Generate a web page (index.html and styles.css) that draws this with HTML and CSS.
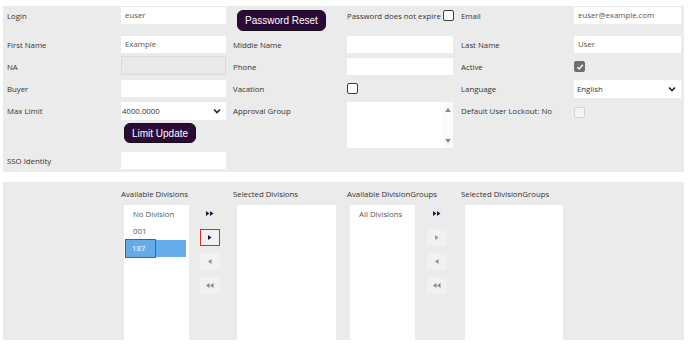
FILE: index.html
```html
<!DOCTYPE html>
<html>
<head>
    <meta charset="utf-8">
    <title>User</title>
    <link rel="stylesheet" href="styles.css">
</head>
<body>
    <div class="panel user-panel">
        <div class="label">Login</div>
        <div class="field">euser</div>
        <div><button class="dark-button reset-button">Password Reset</button></div>
        <div class="check-cell">Password does not expire <span class="check"></span></div>
        <div class="label">Email</div>
        <div class="field wide">euser@example.com</div>

        <div class="label">First Name</div>
        <div class="field">Example</div>
        <div class="label">Middle Name</div>
        <div class="field mid"></div>
        <div class="label">Last Name</div>
        <div class="field wide">User</div>

        <div class="label tall">NA</div>
        <div class="field disabled"></div>
        <div class="label tall">Phone</div>
        <div class="field mid shifted"></div>
        <div class="label tall">Active</div>
        <div class="check-cell tall"><span class="check checked">
            <svg width="8" height="8" viewBox="0 0 8 8"><path d="M1.3 4.2 L3.2 6 L6.8 1.8" fill="none" stroke="#fff" stroke-width="1.4"/></svg>
        </span></div>

        <div class="label">Buyer</div>
        <div class="field"></div>
        <div class="label">Vacation</div>
        <div class="check-cell"><span class="check"></span></div>
        <div class="label">Language</div>
        <div class="field wide select">English
            <svg width="8" height="6" viewBox="0 0 8 6"><path d="M1 1.5 L4 4.5 L7 1.5" fill="none" stroke="#222" stroke-width="1.6"/></svg>
        </div>

        <div class="label">Max Limit</div>
        <div class="field select limit">4000.0000
            <svg width="8" height="6" viewBox="0 0 8 6"><path d="M1 1.5 L4 4.5 L7 1.5" fill="none" stroke="#222" stroke-width="1.6"/></svg>
        </div>
        <div class="label">Approval Group</div>
        <div class="textarea">
            <div class="scrollbar">
                <span class="arrow-up"></span>
                <span class="arrow-down"></span>
            </div>
        </div>
        <div class="label">Default User Lockout: No</div>
        <div class="check-cell"><span class="check disabled-check"></span></div>

        <div></div>
        <div><button class="dark-button limit-button">Limit Update</button></div>
        <div></div>
        <div></div>
        <div></div>

        <div class="label">SSO Identity</div>
        <div class="field"></div>
    </div>

    <div class="panel division-panel">
        <div></div>
        <div class="picker">
            <div class="picker-label">Available Divisions</div>
            <div class="picker-body">
                <div class="list narrow">
                    <div class="list-item">No Division</div>
                    <div class="list-item">001</div>
                    <div class="list-item selected">187<span class="highlight"></span></div>
                </div>
                <div class="move-buttons">
                    <div class="move-button plain">
                        <svg width="8" height="5" viewBox="0 0 8 5"><path d="M0 0 L3.5 2.5 L0 5 Z M4 0 L7.5 2.5 L4 5 Z" fill="#1b1b4a"/></svg>
                    </div>
                    <div class="move-button marked">
                        <svg width="4" height="5" viewBox="0 0 4 5"><path d="M0 0 L3.5 2.5 L0 5 Z" fill="#1b1b4a"/></svg>
                    </div>
                    <div class="move-button">
                        <svg width="4" height="5" viewBox="0 0 4 5"><path d="M3.5 0 L0 2.5 L3.5 5 Z" fill="#8d8a9c"/></svg>
                    </div>
                    <div class="move-button">
                        <svg width="8" height="5" viewBox="0 0 8 5"><path d="M3.5 0 L0 2.5 L3.5 5 Z M7.5 0 L4 2.5 L7.5 5 Z" fill="#8a7f98"/></svg>
                    </div>
                </div>
            </div>
        </div>
        <div class="picker">
            <div class="picker-label">Selected Divisions</div>
            <div class="list broad"></div>
        </div>
        <div class="picker">
            <div class="picker-label">Available DivisionGroups</div>
            <div class="picker-body">
                <div class="list narrow">
                    <div class="list-item">All Divisions</div>
                </div>
                <div class="move-buttons">
                    <div class="move-button plain">
                        <svg width="8" height="5" viewBox="0 0 8 5"><path d="M0 0 L3.5 2.5 L0 5 Z M4 0 L7.5 2.5 L4 5 Z" fill="#1b1b4a"/></svg>
                    </div>
                    <div class="move-button">
                        <svg width="4" height="5" viewBox="0 0 4 5"><path d="M0 0 L3.5 2.5 L0 5 Z" fill="#9a97a6"/></svg>
                    </div>
                    <div class="move-button">
                        <svg width="4" height="5" viewBox="0 0 4 5"><path d="M3.5 0 L0 2.5 L3.5 5 Z" fill="#8d8a9c"/></svg>
                    </div>
                    <div class="move-button">
                        <svg width="8" height="5" viewBox="0 0 8 5"><path d="M3.5 0 L0 2.5 L3.5 5 Z M7.5 0 L4 2.5 L7.5 5 Z" fill="#8a7f98"/></svg>
                    </div>
                </div>
            </div>
        </div>
        <div class="picker">
            <div class="picker-label">Selected DivisionGroups</div>
            <div class="list broad"></div>
        </div>
    </div>
</body>
</html>
```

FILE: styles.css
```css
:root {
    --panel-bg: #ebebeb;
    --label-color: #333333;
    --value-color: #555555;
    --button-bg: #2c0a38;
    --select-blue: #63ace9;
    --mark-red: #e0282c;
}

* {
    margin: 0;
    padding: 0;
    box-sizing: border-box;
}

body {
    background: #ffffff;
    font-family: "Open Sans", "Noto Sans", sans-serif;
    font-size: 7.8px;
    color: var(--label-color);
    padding: 6px 4px 0 3px;
}

.panel {
    background: var(--panel-bg);
    width: 681px;
    display: grid;
    grid-template-columns: 114px 112px 114px 114px 113px 107px;
    padding-left: 4px;
}

/* top form */
.user-panel {
    grid-template-rows: 29px 20px 24px 22px 21px 29px 17px;
    padding-top: 1px;
    padding-bottom: 3px;
    align-items: start;
}

.label {
    line-height: 17px;
    padding-top: 1px;
    white-space: nowrap;
}

.label.tall {
    line-height: 20px;
}

.field {
    width: 105px;
    height: 17px;
    line-height: 17px;
    background: #ffffff;
    padding: 0 4px;
    color: var(--value-color);
    white-space: nowrap;
}

.field.mid {
    width: 106px;
}

.field.wide {
    width: 107px;
}

.field.shifted {
    margin-top: 2px;
}

.field.disabled {
    height: 19px;
    background: #e9e9e9;
    border: 1px solid #dadada;
}

.select {
    display: flex;
    justify-content: space-between;
    align-items: center;
    height: 18px;
    color: #333;
    padding: 0 5px 0 3px;
}

.select.limit {
    padding-left: 1px;
}

.check-cell {
    display: flex;
    align-items: center;
    gap: 2px;
    height: 17px;
    white-space: nowrap;
}

.check-cell.tall {
    height: 19px;
    padding-top: 2px;
}

.check {
    width: 11px;
    height: 11px;
    border: 1px solid #3c3c3c;
    border-radius: 2px;
    background: #ffffff;
    display: flex;
    align-items: center;
    justify-content: center;
}

.check.checked {
    background: #6e6e6e;
    border-color: #6e6e6e;
}

.check.disabled-check {
    background: #f4f4f4;
    border-color: #d2d2d2;
    margin-top: 3px;
}

.dark-button {
    background: var(--button-bg);
    color: #ffffff;
    border: 1px solid #151015;
    border-radius: 6px;
    font-family: "Liberation Sans", Arial, sans-serif;
    font-size: 10px;
    cursor: pointer;
}

.reset-button {
    margin: 3px 0 0 4px;
    width: 89px;
    height: 21px;
}

.limit-button {
    margin-left: 3px;
    width: 72px;
    height: 20px;
}

.textarea {
    grid-row: span 2;
    width: 106px;
    height: 46px;
    background: #ffffff;
    display: flex;
    justify-content: flex-end;
}

.scrollbar {
    width: 10px;
    display: flex;
    flex-direction: column;
    justify-content: space-between;
    align-items: center;
    padding: 6px 0 5px;
    background: #fbfbfb;
}

.arrow-up {
    border-left: 3px solid transparent;
    border-right: 3px solid transparent;
    border-bottom: 4px solid #8c8c8c;
}

.arrow-down {
    border-left: 3px solid transparent;
    border-right: 3px solid transparent;
    border-top: 4px solid #8c8c8c;
}

/* division pickers */
.division-panel {
    margin-top: 10px;
    height: 158px;
    padding-top: 6px;
}

.picker {
    display: flex;
    flex-direction: column;
}

.picker-label {
    line-height: 12px;
    margin-bottom: 5px;
    white-space: nowrap;
}

.picker-body {
    display: flex;
    align-items: flex-start;
}

.list {
    background: #ffffff;
    height: 135px;
    margin-left: 3px;
    padding-top: 1px;
    color: var(--value-color);
}

.list.narrow {
    width: 65px;
}

.list.broad {
    width: 99px;
    margin-left: 4px;
}

.picker:last-child .list.broad {
    width: 98px;
}

.list-item {
    position: relative;
    height: 17px;
    line-height: 17px;
    margin: 0 3px 0 1px;
    padding-left: 8px;
    white-space: nowrap;
}

.list-item.selected {
    background: var(--select-blue);
    color: #ffffff;
    padding-left: 7px;
}

.highlight {
    position: absolute;
    left: 0;
    top: -1px;
    width: 31px;
    height: 19px;
    border: 1px solid var(--mark-red);
}

.move-buttons {
    display: flex;
    flex-direction: column;
    gap: 7px;
    margin-left: 11px;
}

.picker:nth-child(4) .move-buttons {
    margin-left: 12px;
}

.move-button {
    width: 20px;
    height: 17px;
    background: #f1f1f1;
    display: flex;
    align-items: center;
    justify-content: center;
}

.move-button.plain {
    background: transparent;
}

.move-button.marked {
    background: #f1f1f1;
    border: 1px solid var(--mark-red);
}
```
